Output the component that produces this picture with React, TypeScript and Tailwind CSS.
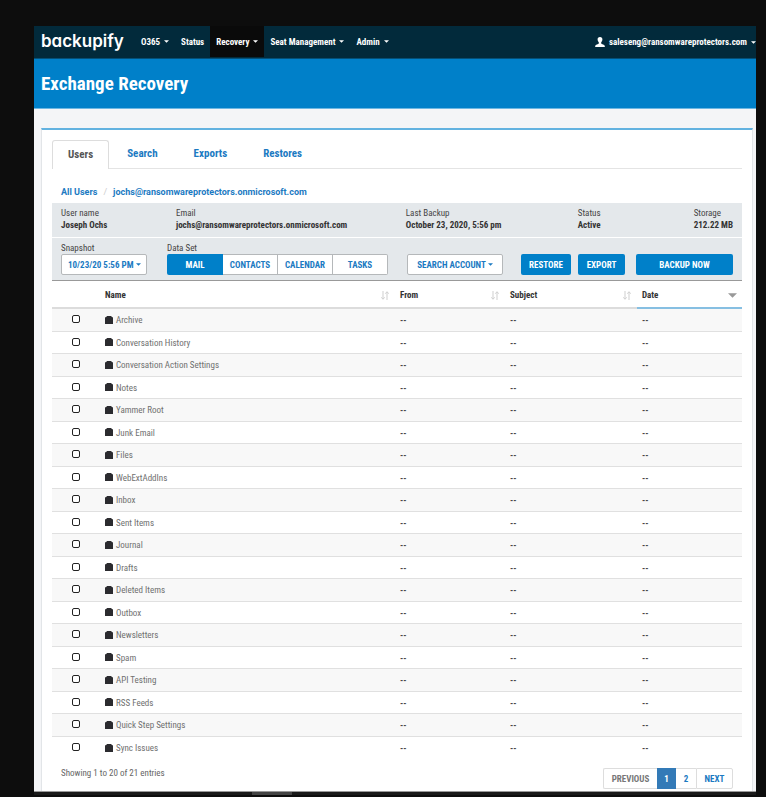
import type { ReactNode } from "react";

const folders = [
  "Archive",
  "Conversation History",
  "Conversation Action Settings",
  "Notes",
  "Yammer Root",
  "Junk Email",
  "Files",
  "WebExtAddIns",
  "Inbox",
  "Sent Items",
  "Journal",
  "Drafts",
  "Deleted Items",
  "Outbox",
  "Newsletters",
  "Spam",
  "API Testing",
  "RSS Feeds",
  "Quick Step Settings",
  "Sync Issues",
];

const navItems = [
  { label: "O365", menu: true, active: false },
  { label: "Status", menu: false, active: false },
  { label: "Recovery", menu: true, active: true },
  { label: "Seat Management", menu: true, active: false },
  { label: "Admin", menu: true, active: false },
];

const details = [
  { label: "User name", value: "Joseph Ochs" },
  { label: "Email", value: "jochs@ransomwareprotectors.onmicrosoft.com" },
  { label: "Last Backup", value: "October 23, 2020, 5:56 pm" },
  { label: "Status", value: "Active" },
  { label: "Storage", value: "212.22 MB" },
];

function Caret() {
  return (
    <svg viewBox="0 0 6 3" className="h-[3px] w-[5px] shrink-0 fill-current" aria-hidden="true">
      <path d="M0 0h6L3 3z" />
    </svg>
  );
}

function UserIcon() {
  return (
    <svg viewBox="0 0 10 10" className="size-[10px] shrink-0 fill-current" aria-hidden="true">
      <path d="M5 0C3.400 0 2.500 1 2.600 2.500 2.700 3.900 3.300 4.700 3.800 5.200v1.300C3.500 7.200.400 7.500.200 9V10h9.600V9C9.600 7.500 6.500 7.200 6.200 6.500V5.200c.5-.5 1.100-1.300 1.200-2.700C7.500 1 6.600 0 5 0z" />
    </svg>
  );
}

function FolderIcon() {
  return (
    <svg viewBox="0 0 8 8" className="mb-px size-2 shrink-0 fill-[#2b2b2f]" aria-hidden="true">
      <path d="M0 1.300h1L2 0h4l1 1 1 .5V8H0z" />
    </svg>
  );
}

function SortIcon() {
  return (
    <svg viewBox="0 0 8 9" className="h-[9px] w-2 shrink-0 fill-none stroke-[#cfcfcf]" aria-hidden="true">
      <path d="M2 0v8M.3 6.300 2 8.300l1.700-2M6 9V1M4.300 2.700 6 .700l1.700 2" />
    </svg>
  );
}

function HeaderCell({ children }: { children: ReactNode }) {
  return (
    <th scope="col" className="border-b-2 border-[#dcdcdc] pt-[2px] pr-[6px] pl-[5px] text-left font-bold">
      <span className="flex items-center justify-between">
        {children}
        <SortIcon />
      </span>
    </th>
  );
}

const solid = "h-[21px] rounded-[2px] bg-[#0080c9] text-center font-bold text-white";

export default function App() {
  return (
    <div className="min-h-screen bg-[#0d0d0d] pt-[26px] pr-[10px] pl-[34px] font-['Roboto_Condensed','Roboto',sans-serif] text-[9px] leading-3 text-[#444]">
      <div className="border-b border-[#999] bg-[#f4f5f7]">
        <header className="flex h-[33px] items-stretch border-b border-[#045078] bg-[#022a3b] pl-[7px] font-bold text-white">
          <a href="#" className="mr-[10px] flex w-[84px] items-center pb-[2px] font-['Inter',sans-serif] text-[17px] leading-6 font-semibold [font-feature-settings:'cv11']">
            backupify
          </a>
          <nav className="flex pb-px">
            {navItems.map((item) => (
              <button
                key={item.label}
                type="button"
                className={`flex items-center gap-1 px-[6px] ${item.active ? "bg-[#0a0a0a]" : ""}`}
              >
                {item.label}
                {item.menu && <Caret />}
              </button>
            ))}
          </nav>
          <button type="button" className="ml-auto flex items-center gap-1">
            <UserIcon />
            saleseng@ransomwareprotectors.com
            <Caret />
          </button>
        </header>

        <div className="flex h-[50px] items-center border-b border-[#6db7e2] bg-[#0080c9] pl-[7px]">
          <h1 className="text-[19px] leading-6 font-bold text-white">Exchange Recovery</h1>
        </div>

        <main className="mt-[19px] mr-[3px] ml-[7px] border-x border-t-2 border-x-[#e2e5e8] border-t-[#62b2e0] bg-white px-[10px] pt-[10px]">
          <nav className="flex h-[29px] items-stretch border-b border-[#e4e4e4] text-[11px] font-bold text-[#1b7ac2]">
            <a href="#" className="-mb-px flex items-center rounded-t-[3px] border border-b-0 border-[#ddd] bg-white px-[15px] text-[#555]">
              Users
            </a>
            <a href="#" className="flex items-center px-[18px]">Search</a>
            <a href="#" className="flex items-center px-[18px]">Exports</a>
            <a href="#" className="flex items-center px-[18px]">Restores</a>
          </nav>

          <div className="flex h-[34px] items-center gap-[6px] pt-3 pl-[9px] font-['Roboto',sans-serif] font-bold text-[#1b7ac2]">
            <a href="#">All Users</a>
            <span className="font-normal text-[#ccc]">/</span>
            <a href="#">jochs@ransomwareprotectors.onmicrosoft.com</a>
          </div>

          <dl className="grid h-[35px] grid-cols-[115fr_230fr_172fr_116fr_39fr] items-center border-b border-white bg-[#e4e8eb] px-[9px] pb-[3px] whitespace-nowrap">
            {details.map((item) => (
              <div key={item.label}>
                <dt>{item.label}</dt>
                <dd className="font-bold text-[#333]">{item.value}</dd>
              </div>
            ))}
          </dl>

          <div className="flex items-end border-b border-[#999] bg-[#e4e8eb] px-[9px] pt-1 pb-[5px]">
            <div>
              <label htmlFor="snapshot" className="block">Snapshot</label>
              <div className="grid w-[86px] items-center">
                <select
                  id="snapshot"
                  className="col-start-1 row-start-1 h-[21px] w-full appearance-none rounded-[2px] border border-[#b5b8ba] bg-white pl-[6px] font-bold text-[#1b7ac2]"
                >
                  <option>10/23/20 5:56 PM</option>
                </select>
                <span className="pointer-events-none col-start-1 row-start-1 mr-[6px] justify-self-end text-[#1b7ac2]">
                  <Caret />
                </span>
              </div>
            </div>
            <div className="ml-5">
              <span id="dataset">Data Set</span>
              <div role="group" aria-labelledby="dataset" className="flex h-[21px] font-bold text-[#1b7ac2]">
                <button type="button" className="w-14 rounded-l-[2px] bg-[#0080c9] text-white">MAIL</button>
                <button type="button" className="w-[55px] border border-l-0 border-[#b5b8ba] bg-white">CONTACTS</button>
                <button type="button" className="w-[55px] border border-l-0 border-[#b5b8ba] bg-white">CALENDAR</button>
                <button type="button" className="w-[55px] rounded-r-[2px] border border-l-0 border-[#b5b8ba] bg-white">TASKS</button>
              </div>
            </div>
            <button
              type="button"
              className="ml-[19px] flex h-[21px] w-24 items-center justify-center gap-[2px] rounded-[2px] border border-[#b5b8ba] bg-white font-bold text-[#1b7ac2]"
            >
              SEARCH ACCOUNT
              <Caret />
            </button>
            <button type="button" className={`${solid} ml-auto w-[50px]`}>RESTORE</button>
            <button type="button" className={`${solid} ml-[7px] w-[47px]`}>EXPORT</button>
            <button type="button" className={`${solid} ml-[11px] w-[97px]`}>BACKUP NOW</button>
          </div>

          <table className="w-full table-fixed border-separate border-spacing-0">
            <colgroup>
              <col className="w-12" />
              <col />
              <col className="w-[110px]" />
              <col className="w-[132px]" />
              <col className="w-[105px]" />
            </colgroup>
            <thead>
              <tr className="h-7 text-[#333]">
                <td className="border-b-2 border-[#dcdcdc]" />
                <HeaderCell>Name</HeaderCell>
                <HeaderCell>From</HeaderCell>
                <HeaderCell>Subject</HeaderCell>
                <th scope="col" className="border-b-2 border-[#86bfe2] px-[5px] pt-[2px] text-left font-bold">
                  <span className="flex items-center justify-between">
                    Date
                    <svg viewBox="0 0 8 4" className="h-[5px] w-[9px] fill-[#999]" aria-hidden="true">
                      <path d="M0 0h8L4 4z" />
                    </svg>
                  </span>
                </th>
              </tr>
            </thead>
            <tbody className="[&>tr:last-child>td]:border-b-0">
              {folders.map((name, i) => (
                <tr key={name} className="h-[22px] odd:h-[23px] odd:bg-[#f8f8f8] [&>td]:border-b [&>td]:border-[#e0e0e0] [&>td]:p-0">
                  <td>
                    <input
                      id={`folder-${i}`}
                      type="checkbox"
                      className="mx-auto mb-[2px] block size-2 appearance-none rounded-[2px] border border-[#222] bg-white"
                    />
                  </td>
                  <td>
                    <label htmlFor={`folder-${i}`} className="flex items-center gap-[3px] pl-[5px] text-[#707070]">
                      <FolderIcon />
                      {name}
                    </label>
                  </td>
                  <td className="pl-[5px]! font-bold">--</td>
                  <td className="pl-[5px]! font-bold">--</td>
                  <td className="pl-[5px]! font-bold">--</td>
                </tr>
              ))}
            </tbody>
          </table>

          <footer className="flex items-start justify-between px-[9px] pt-[9px] pb-[2px]">
            <p className="leading-[10px] text-[#666]">Showing 1 to 20 of 21 entries</p>
            <nav aria-label="Pages" className="flex h-[21px] font-bold text-[#1b7ac2]">
              <button type="button" className="w-[54px] rounded-l-[2px] border border-r-0 border-[#ddd] text-[#777]">PREVIOUS</button>
              <button type="button" className="w-[19px] bg-[#337ab7] text-white">1</button>
              <button type="button" className="w-5 border-y border-[#ddd]">2</button>
              <button type="button" className="w-[37px] rounded-r-[2px] border border-[#ddd]">NEXT</button>
            </nav>
          </footer>
        </main>
      </div>
      <div className="h-[3px] bg-[#1a1a1a]">
        <div className="ml-[218px] h-[3px] w-10 bg-[#444]" />
      </div>
    </div>
  );
}
